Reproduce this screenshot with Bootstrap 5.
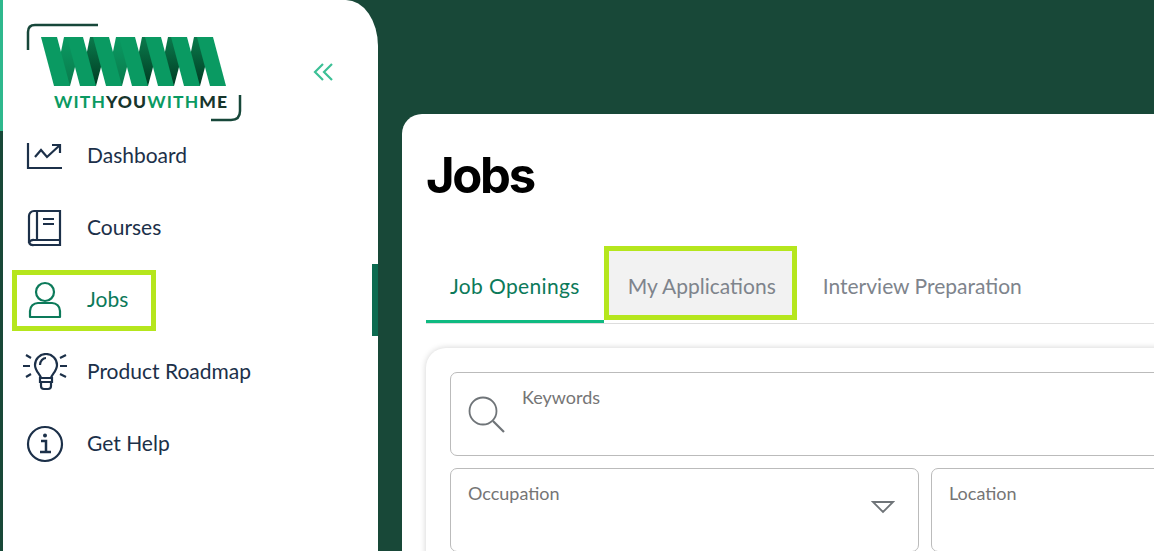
<!DOCTYPE html>
<html lang="en">
<head>
<meta charset="UTF-8" />
<title>Jobs</title>
<link rel="stylesheet" href="https://cdn.jsdelivr.net/npm/bootstrap@5.3.0/dist/css/bootstrap.min.css" />
<style>
  html, body { height: 100%; }
  body { background: #184838; overflow: hidden; font-family: "Lato", "Open Sans", sans-serif; }
  .page-wrap { height: 551px; width: 1400px; }
  .side { width: 378px; flex: 0 0 378px; height: 551px; background: #fff; border-top-right-radius: 32px 46px; border-left: 3px solid #184838; }
  .side-head { height: 131px; margin-left: -3px; border-left: 3px solid #2fb88d; }
  .logo-box { width: 243px; height: 131px; margin-left: -3px; }
  .logo-word { font-size: 17.5px; font-weight: 700; fill: #0a9a62; font-family: "Lato", sans-serif; }
  .logo-word .dk { fill: #17352c; font-weight: 900; }
  .nav-row { height: 72px; position: relative; }
  .nav-entry { margin-left: 14px; width: 134px; height: 51px; padding-left: 8px; gap: 22px; color: #1c3049; font-size: 21px; text-decoration: none; white-space: nowrap; }
  .nav-entry svg { flex: 0 0 40px; }
  .nav-entry svg.wide-icon { flex: 0 0 44px; margin: 0 -2px; }
  .nav-text { margin-top: -2px; }
  .nav-row.is-on .nav-entry { color: #0c7a5a; outline: 5px solid #b5e61d; }
  .nav-row.is-on::after { content: ""; position: absolute; right: 0; top: 0; width: 6px; height: 72px; background: #0c6b50; }
  .collapse-btn { margin-left: 70px; margin-top: 13px; }
  .nav-list { margin-top: -11px; }
  .panel { width: 1000px; flex: 0 0 1000px; margin-left: 24px; margin-top: 114px; height: 600px; background: #fff; border-top-left-radius: 20px; padding: 0 24px; }
  .panel h1 { font-size: 49px; font-weight: 700; color: #000; margin: 0; padding-top: 34px; height: 133px; line-height: 56px; font-family: "Inter", sans-serif; letter-spacing: -2.3px; }
  .tab-strip { height: 77px; border-bottom: 1px solid #ddd; flex-wrap: nowrap; }
  .tab-strip .nav-link { height: 76px; border: 0; border-radius: 0; color: #7e848c; font-size: 21px; padding: 2px 24px 0 26px; white-space: nowrap; display: flex; align-items: center; }
  .tab-strip .nav-link.active { color: #0c7a5a; border-bottom: 3px solid #0fba81; background: transparent; padding: 5px 24px 0; letter-spacing: .36px; }
  .tab-strip .nav-link.is-mark { background: #f2f2f2; outline: 5px solid #b5e61d; outline-offset: -5px; height: 74px; margin-top: -1px; padding: 6px 21px 0 24px; }
  .filter-card { margin-top: 24px; border: 0; border-radius: 20px; box-shadow: 0 0 6px rgba(0,0,0,.18); padding: 24px; }
  .filter-box { border: 1px solid #bbb; border-radius: 7px; height: 84px; color: #757575; font-size: 18px; }
  .search-row { margin-bottom: 12px; }
  .filter-grid { display: grid; grid-template-columns: 469px 469px; gap: 12px; }
  .filter-label { margin: 11px 0 0 17px; }
  .filter-search { margin: 23px 0 0 17px; }
  .filter-search + .filter-label { margin-left: 16px; }
  .filter-arrow { margin: 31px 23px 0 0; }
</style>
</head>
<body>
<div class="page-wrap d-flex">
  <aside class="side">
    <div class="side-head d-flex align-items-center">
      <div class="logo-box">
        <svg width="243" height="131" viewBox="0 0 243 131">
          <defs>
            <linearGradient id="foldDark" x1="0" y1="0" x2="0" y2="1"><stop offset="0" stop-color="#0a7a4c"/><stop offset="1" stop-color="#003b22"/></linearGradient>
            <linearGradient id="foldMid" x1="0" y1="0" x2="0" y2="1"><stop offset="0" stop-color="#0a9a62"/><stop offset="1" stop-color="#0a7a4c"/></linearGradient>
          </defs>
          <g fill="url(#foldMid)">
            <polygon points="54,86 70,86 83,37 64,37"/>
            <polygon points="106,86 122,86 135,37 116,37"/>
          </g>
          <g fill="url(#foldDark)">
            <polygon points="80,86 96,86 109,37 90,37"/>
            <polygon points="132,86 148,86 161,37 142,37"/>
            <polygon points="158,86 174,86 187,37 168,37"/>
            <polygon points="184,86 200,86 213,37 194,37"/>
          </g>
          <g fill="#0a9a62">
            <polygon points="41,37 57,37 70,86 54,86"/>
            <polygon points="67,37 83,37 96,86 80,86"/>
            <polygon points="93,37 109,37 122,86 106,86"/>
            <polygon points="119,37 135,37 148,86 132,86"/>
            <polygon points="145,37 161,37 174,86 158,86"/>
            <polygon points="171,37 187,37 200,86 184,86"/>
            <polygon points="197,37 213,37 226,86 210,86"/>
          </g>
          <path d="M28 50V32Q28 25 35 25H98" fill="none" stroke="#17473a" stroke-width="2.500"/>
          <path d="M240 95V111Q240 120 231 120H211" fill="none" stroke="#17473a" stroke-width="2.500"/>
          <text x="54" y="108" class="logo-word" textLength="173">WITH<tspan class="dk">YOU</tspan>WITH<tspan class="dk">ME</tspan></text>
        </svg>
      </div>
      <svg class="collapse-btn" width="20" height="18" viewBox="0 0 20 18"><path d="M10 1 2 9l8 8M19 1l-8 8 8 8" fill="none" stroke="#3cc096" stroke-width="2.200"/></svg>
    </div>
    <div class="nav-list">
      <div class="nav-row d-flex align-items-center"><a class="nav-entry d-flex align-items-center" href="#">
        <svg width="40" height="36" viewBox="0 0 40 36"><path d="M3 5v25h34M10 19l6-7 6 7 13-12M27 7h8v8" fill="none" stroke="#1c3049" stroke-width="2.200"/></svg><span class="nav-text">Dashboard</span></a></div>
      <div class="nav-row d-flex align-items-center"><a class="nav-entry d-flex align-items-center" href="#">
        <svg width="40" height="38" viewBox="0 0 40 38"><path d="M9 2h26v29H9a5 5 0 0 0-5 3V7a5 5 0 0 1 5-5zM12 2v29M35 31v5H9a5 5 0 0 1-5-2M18 10h11M18 15h11" fill="none" stroke="#1c3049" stroke-width="2.200"/></svg><span class="nav-text">Courses</span></a></div>
      <div class="nav-row is-on d-flex align-items-center"><a class="nav-entry d-flex align-items-center" href="#">
        <svg width="40" height="38" viewBox="0 0 40 38"><circle cx="20" cy="11" r="9" fill="none" stroke="#0c7a5a" stroke-width="2.200"/><path d="M5 36v-6a8 8 0 0 1 8-8h14a8 8 0 0 1 8 8v6z" fill="none" stroke="#0c7a5a" stroke-width="2.200" stroke-linejoin="round"/></svg><span class="nav-text">Jobs</span></a></div>
      <div class="nav-row d-flex align-items-center"><a class="nav-entry d-flex align-items-center" href="#">
        <svg class="wide-icon" width="44" height="38" viewBox="0 0 44 38"><path d="M18 25c-1-4-6-7-6-13a11 11 0 0 1 22 0c0 6-5 9-6 13zM17 25h12v4H17zM18 29v4a3 3 0 0 0 3 3h4a3 3 0 0 0 3-3v-4M23 5c-3 0-6 3-6 7M0 13h7M37 13h7M3 2l5 3M43 2l-6 3M3 24l5-3M43 24l-6-3" fill="none" stroke="#1c3049" stroke-width="2.200"/></svg><span class="nav-text">Product Roadmap</span></a></div>
      <div class="nav-row d-flex align-items-center"><a class="nav-entry d-flex align-items-center" href="#">
        <svg width="40" height="38" viewBox="0 0 40 38"><circle cx="20" cy="19" r="17" fill="none" stroke="#1c3049" stroke-width="2.200"/><path d="M16 16h5v11M15 27h11" fill="none" stroke="#1c3049" stroke-width="2.500"/><circle cx="20" cy="10.500" r="2" fill="#1c3049"/></svg><span class="nav-text">Get Help</span></a></div>
    </div>
  </aside>
  <main class="panel">
    <h1>Jobs</h1>
    <ul class="nav tab-strip">
      <li class="nav-item"><a class="nav-link active" href="#">Job Openings</a></li>
      <li class="nav-item"><a class="nav-link is-mark" href="#">My Applications</a></li>
      <li class="nav-item"><a class="nav-link" href="#">Interview Preparation</a></li>
    </ul>
    <div class="card filter-card">
      <div class="filter-box d-flex search-row">
        <svg class="filter-search" width="38" height="38" viewBox="0 0 38 38"><circle cx="15" cy="15" r="13.500" fill="none" stroke="#6f7478" stroke-width="1.800"/><path d="M25 25l11 11" stroke="#6f7478" stroke-width="2.200"/></svg>
        <span class="filter-label">Keywords</span>
      </div>
      <div class="filter-grid">
        <div class="filter-box d-flex justify-content-between"><span class="filter-label">Occupation</span>
          <svg class="filter-arrow" width="24" height="14" viewBox="0 0 24 14"><path d="M2 2h20L12 12z" fill="none" stroke="#6f7478" stroke-width="1.800"/></svg></div>
        <div class="filter-box"><div class="filter-label">Location</div></div>
      </div>
    </div>
  </main>
</div>
<script src="https://cdn.jsdelivr.net/npm/bootstrap@5.3.0/dist/js/bootstrap.bundle.min.js"></script>
</body>
</html>
